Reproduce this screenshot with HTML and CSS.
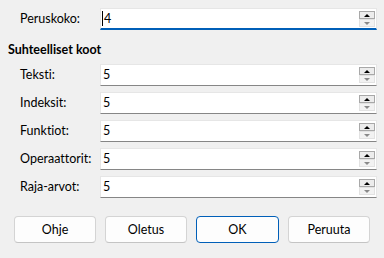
FILE: index.html
```html
<!DOCTYPE html>
<html>
<head>
<meta charset="utf-8">
<link rel="stylesheet" href="styles.css">
</head>
<body>
<div class="dialog">
  <div class="row">
    <span class="label">Peruskoko:</span>
    <div class="spin focused"><span class="caret"></span><span class="val">4</span>
      <div class="btns"><span class="up"></span><span class="down"></span></div></div>
  </div>
  <div class="heading">Suhteelliset koot</div>
  <div class="rows">
    <div class="row">
      <span class="label">Teksti:</span>
      <div class="spin"><span class="val">5</span>
        <div class="btns"><span class="up"></span><span class="down"></span></div></div>
    </div>
    <div class="row">
      <span class="label">Indeksit:</span>
      <div class="spin"><span class="val">5</span>
        <div class="btns"><span class="up"></span><span class="down"></span></div></div>
    </div>
    <div class="row">
      <span class="label">Funktiot:</span>
      <div class="spin"><span class="val">5</span>
        <div class="btns"><span class="up"></span><span class="down"></span></div></div>
    </div>
    <div class="row">
      <span class="label">Operaattorit:</span>
      <div class="spin"><span class="val">5</span>
        <div class="btns"><span class="up"></span><span class="down"></span></div></div>
    </div>
    <div class="row">
      <span class="label">Raja-arvot:</span>
      <div class="spin"><span class="val">5</span>
        <div class="btns"><span class="up"></span><span class="down"></span></div></div>
    </div>
  </div>
  <div class="buttons">
    <button class="btn">Ohje</button>
    <button class="btn">Oletus</button>
    <button class="btn default">OK</button>
    <button class="btn">Peruuta</button>
  </div>
</div>
</body>
</html>
```

FILE: styles.css
```css
html, body {
  margin: 0;
  padding: 0;
  background: #f0f0f0;
}
body {
  font-family: Lato, "Noto Sans", sans-serif;
  font-size: 12.5px;
  color: #000;
  font-variant-ligatures: none;
}
.dialog {
  width: 384px;
  height: 258px;
  box-sizing: border-box;
  padding: 8px 7px 0 8px;
}
.row {
  display: flex;
  align-items: center;
  height: 22px;
}
.label {
  width: 92px;
  padding-left: 12px;
  box-sizing: border-box;
  line-height: 16px;
  white-space: nowrap;
}
.spin {
  flex: 1;
  height: 22px;
  box-sizing: border-box;
  background: #fff;
  border: 1px solid #e6e6e6;
  border-bottom: 1px solid #868686;
  display: flex;
  align-items: center;
  padding-left: 1px;
  padding-right: 1px;
}
.spin.focused {
  border-bottom: 2px solid #005fb8;
}
.caret {
  width: 1px;
  height: 15px;
  background: #000;
}
.val {
  flex: 1;
  line-height: 16px;
  padding-left: 1px;
}
.btns {
  display: flex;
  flex-direction: column;
  width: 16px;
  align-self: flex-start;
  margin-top: 2px;
}
.up, .down {
  height: 8px;
  box-sizing: border-box;
  display: flex;
  align-items: center;
  justify-content: center;
}
.up {
  border: 1px solid #a8a8a8;
  background: #ececec;
}
.down {
  border: 1px solid #e2e2e2;
  background: #f2f2f2;
}
.up::after {
  content: "";
  border-left: 3px solid transparent;
  border-right: 3px solid transparent;
  border-bottom: 3px solid #000;
}
.down::after {
  content: "";
  border-left: 3px solid transparent;
  border-right: 3px solid transparent;
  border-top: 3px solid #8a8a8a;
}
.heading {
  font-weight: bold;
  line-height: 16px;
  margin-top: 12px;
  margin-bottom: 6px;
}
.rows {
  display: flex;
  flex-direction: column;
  gap: 6px;
}
.buttons {
  display: flex;
  gap: 9px;
  margin-top: 18px;
  padding-left: 6px;
}
.btn {
  width: 82px;
  height: 27px;
  box-sizing: border-box;
  font: inherit;
  font-variant-ligatures: none;
  color: #000;
  background: #fdfdfd;
  border: 1px solid #d4d4d4;
  border-bottom-color: #c4c4c4;
  border-radius: 4px;
  padding: 0;
}
.btn.default {
  border: 1px solid #005fb8;
  width: 83px;
}
```
